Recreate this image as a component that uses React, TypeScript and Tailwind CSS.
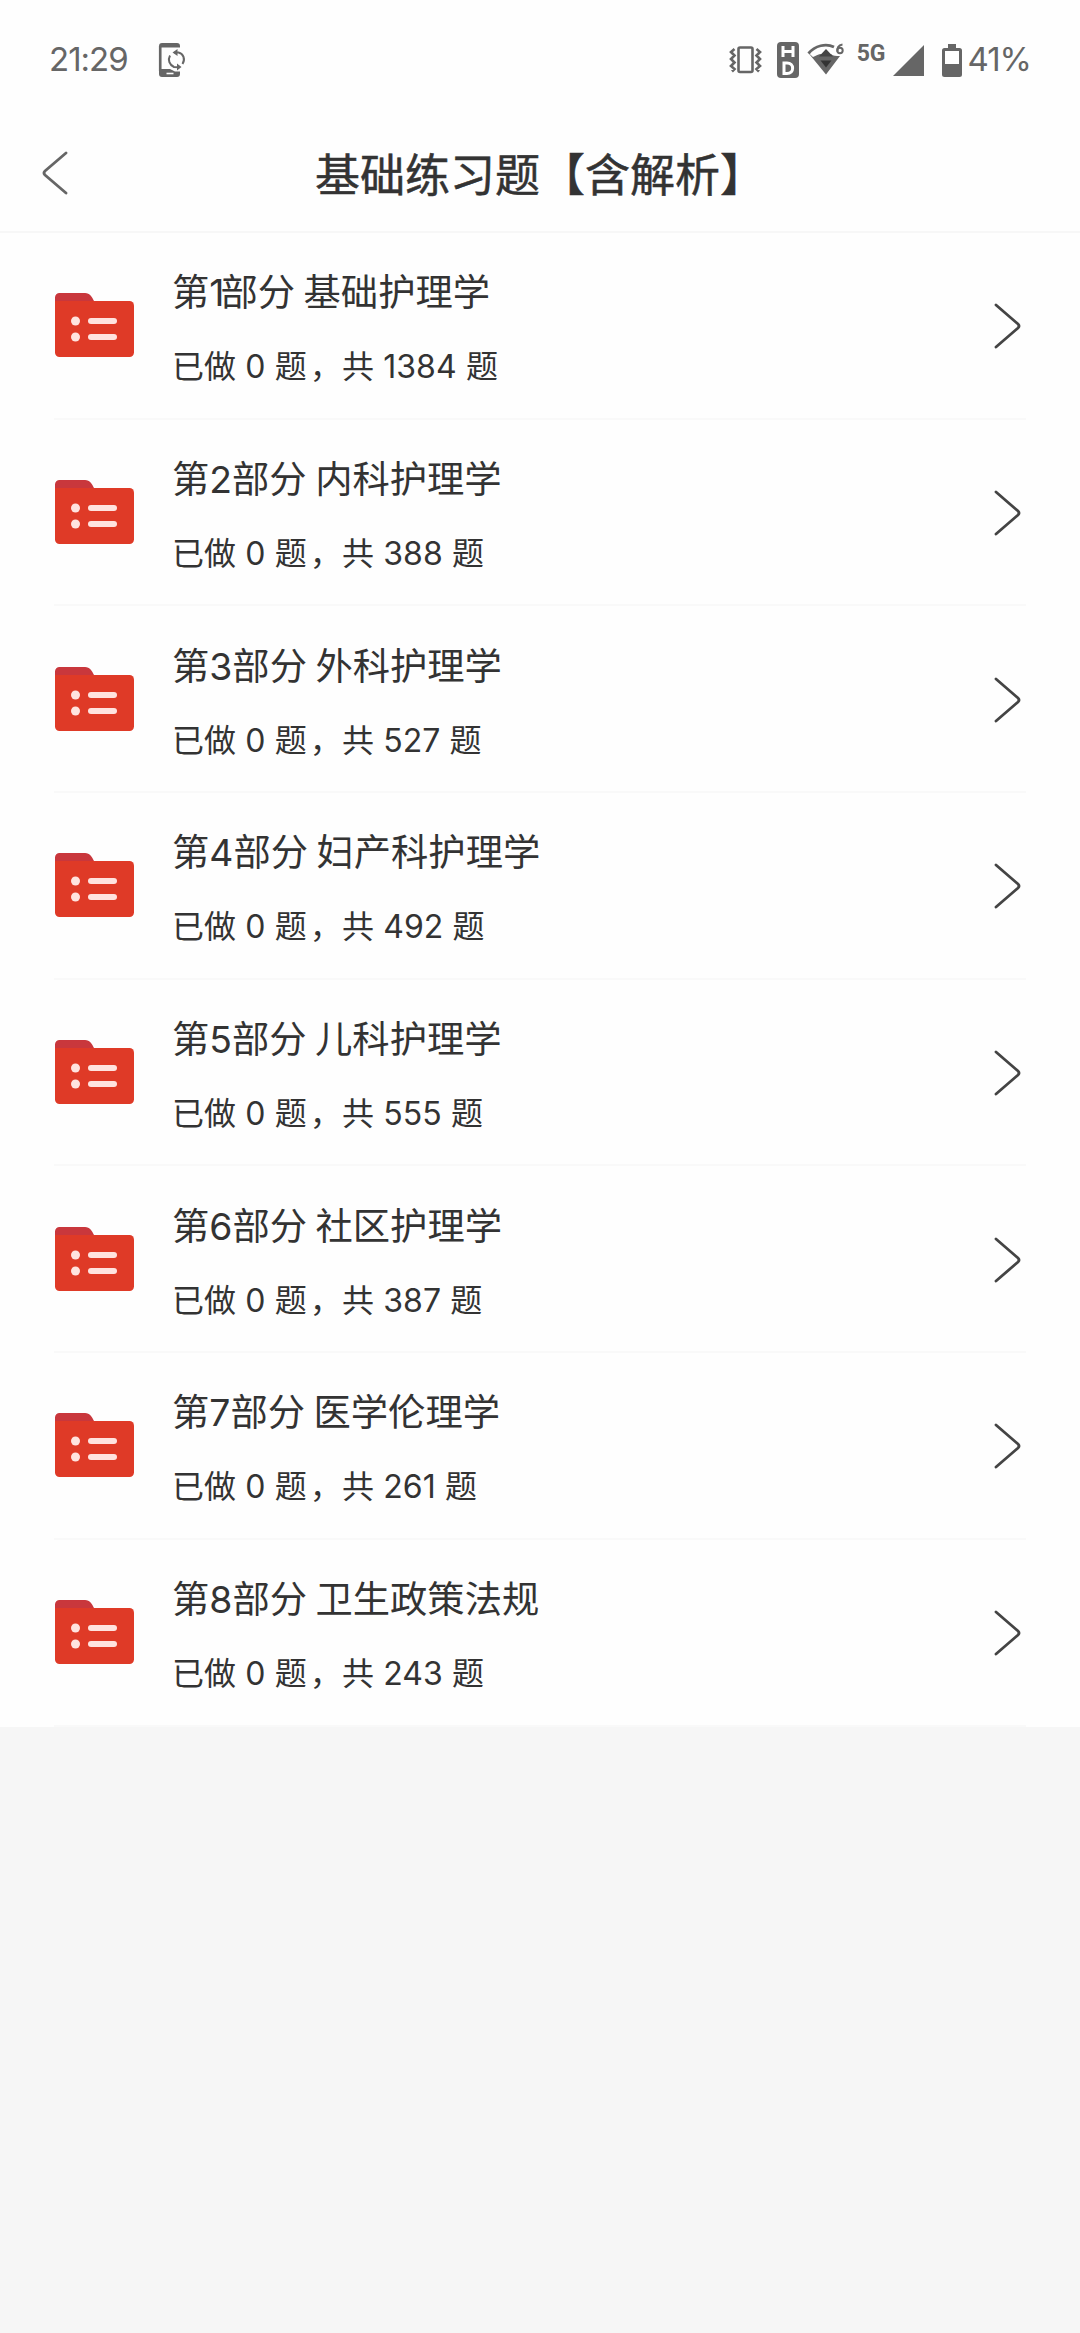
import React, { FC } from 'react';

type Section = {
  index: number;
  name: string;
  done: number;
  total: number;
};

const SECTIONS: Section[] = [
  { index: 1, name: '基础护理学', done: 0, total: 1384 },
  { index: 2, name: '内科护理学', done: 0, total: 388 },
  { index: 3, name: '外科护理学', done: 0, total: 527 },
  { index: 4, name: '妇产科护理学', done: 0, total: 492 },
  { index: 5, name: '儿科护理学', done: 0, total: 555 },
  { index: 6, name: '社区护理学', done: 0, total: 387 },
  { index: 7, name: '医学伦理学', done: 0, total: 261 },
  { index: 8, name: '卫生政策法规', done: 0, total: 243 },
];

const PhoneSyncIcon = () => (
  <svg className="ml-[30px] h-[36px] w-[28px]" viewBox="0 0 28 36" fill="none">
    <path
      d="M4 1h15a3 3 0 0 1 3 3v1.500H3.500V27H12l5 2.500h5V32a3 3 0 0 1-3 3H4a3 3 0 0 1-3-3V4a3 3 0 0 1 3-3z"
      fill="#666"
    />
    <path d="M2 4v25" stroke="#666" strokeWidth="2.200" />
    <path d="M8.500 31.500h7" stroke="#fff" strokeWidth="1.600" />
    <path
      d="M12 13.500c-2.500 4.500-.5 9.500 4 11.500l4.500.3M24.500 22c3-4.500 1-10.500-4-11.500h-4"
      stroke="#666"
      strokeWidth="2"
    />
    <path d="M19.500 7v7L14.500 10.500zM19 21.500v7l4.500-3.500z" fill="#666" />
  </svg>
);

const VibrateIcon = () => (
  <svg className="h-[28px] w-[33px]" viewBox="0 0 33 28" fill="none" stroke="#666" strokeWidth="2.600">
    <rect x="9.500" y="1.500" width="14" height="24.500" rx="1.500" />
    <path d="M5.500 3 2 6l3.500 3.500L2 13l3.500 3.500L2 20l3.500 3-2.500 2.500M27.500 3 31 6l-3.500 3.500L31 13l-3.500 3.500L31 20l-3.500 3 2.500 2.500" />
  </svg>
);

const HdIcon = () => (
  <svg className="ml-[15px] h-[36px] w-[22px]" viewBox="0 0 22 36" fill="none">
    <rect width="22" height="36" rx="4" fill="#666" />
    <path d="M6 4v11M16 4v11M6 9.500h10" stroke="#fff" strokeWidth="3" />
    <path d="M7 21v10.500h3c7.500 0 7.500-10.500 0-10.500z" stroke="#fff" strokeWidth="3" />
  </svg>
);

const WifiIcon = () => (
  <svg className="ml-[8px] h-[36px] w-[38px]" viewBox="0 0 38 36" fill="none">
    <path d="M1.500 11.500C8 3.500 19 1 27 5" stroke="#666" strokeWidth="2.800" />
    <path d="M1 10.500 6 15c3-1.500 6-3 8-3h10c2 2 5 2 9 2L19 32.500z" fill="#666" />
    <path d="M12 14.500 19 7l7 7.500z" fill="#444" />
    <path d="M13.500 18.500h11l-5.500 7z" fill="#333" />
    <path d="M35.500 2.500c-4.500.5-5.500 4-5 7" stroke="#666" strokeWidth="2" />
    <circle cx="33" cy="8.500" r="2.700" stroke="#666" strokeWidth="2" />
  </svg>
);

const SignalIcon = () => (
  <svg className="ml-[7px] h-[31px] w-[31px]" viewBox="0 0 31 31">
    <path d="M31 0v31H0z" fill="#666" />
  </svg>
);

const BatteryIcon = () => (
  <svg className="ml-[18px] h-[33px] w-[20px]" viewBox="0 0 20 33">
    <path
      d="M6 0h8v4h3.500A2.500 2.500 0 0 1 20 6.500v24a2.500 2.500 0 0 1-2.500 2.500h-15A2.500 2.500 0 0 1 0 30.500v-24A2.500 2.500 0 0 1 2.500 4H6z"
      fill="#666"
    />
    <path d="M3 7h14v13H3z" fill="#fff" />
  </svg>
);

const FolderIcon = () => (
  <svg className="h-[64px] w-[79px] shrink-0" viewBox="0 0 79 64">
    <path d="M4.500 0H30c5 0 7 4 9 8v10H0V4.500A4.500 4.500 0 0 1 4.500 0z" fill="#c9373c" />
    <path d="M0 8h74.500A4.500 4.500 0 0 1 79 12.500v47a4.500 4.500 0 0 1-4.500 4.500h-70A4.500 4.500 0 0 1 0 59.500z" fill="#df3a27" />
    <g fill="#ffe3df">
      <circle cx="20.500" cy="28" r="4.500" />
      <circle cx="20.500" cy="44" r="4.500" />
      <rect x="33" y="25" width="29" height="6" rx="3" />
      <rect x="33" y="41" width="29" height="6" rx="3" />
    </g>
  </svg>
);

const StatusBar = () => (
  <div className="flex h-[118px] items-center pt-[2px] pr-[49px] pl-[49px] text-[33px] text-[#666]">
    <span className="tracking-[-1px]">21:29</span>
    <PhoneSyncIcon />
    <div className="ml-auto flex items-center">
      <VibrateIcon />
      <HdIcon />
      <WifiIcon />
      <span className="mb-[14px] ml-[12px] font-[Roboto] text-[23px] leading-none font-bold">5G</span>
      <SignalIcon />
      <BatteryIcon />
      <span className="ml-[6px] tracking-[-1px]">41%</span>
    </div>
  </div>
);

const Header = () => (
  <header className="grid h-[115px] grid-cols-[1fr_auto_1fr] items-center border-b-2 border-[#f7f7f7]">
    <button className="mb-[4px] ml-[42px] w-fit" aria-label="返回">
      <svg className="h-[44px] w-[26px]" viewBox="0 0 26 44" fill="none">
        <path d="M24 2 3 20q-2 2 0 4l21 18" stroke="#666" strokeWidth="2.800" strokeLinecap="round" />
      </svg>
    </button>
    <h1 className="pt-[2px] text-[45px] leading-none text-[#333] [-webkit-text-stroke:0.5px_#333]">
      基础练习题【含解析】
    </h1>
    <span />
  </header>
);

const SectionRow: FC<Section> = ({ index, name, done, total }) => (
  <li className="px-[54px]">
    <div className="flex h-[186.700px] items-center border-b-2 border-[#f9f9f9] pl-[1px]">
      <FolderIcon />
      <div className="ml-[38px] flex-1 pt-[8px] text-[#333]">
        <h2 className="text-[37.300px] leading-[50px] [word-spacing:-2px]">
          第<span className={index === 1 ? 'tracking-[-4px]' : undefined}>{index}</span>部分 {name}
        </h2>
        <p className="mt-[26px] text-[32px] leading-[46px] tracking-[0.1px]">
          已做 {done} 题<span className="pl-[3px]">，</span>共 {total} 题
        </p>
      </div>
      <svg className="mt-[2px] mr-[4px] h-[46px] w-[28px]" viewBox="0 0 28 46" fill="none">
        <path d="m2 2 22 19q2 2 0 4L2 44" stroke="#444" strokeWidth="2.800" strokeLinecap="round" />
      </svg>
    </div>
  </li>
);

export default function App() {
  return (
    <div className="h-[2333px] bg-[#f6f6f6] font-[Inter,'Noto_Sans_CJK_SC',sans-serif]">
      <div className="bg-[#fefefe]">
        <StatusBar />
        <Header />
        <ul>
          {SECTIONS.map((section) => (
            <SectionRow key={section.index} {...section} />
          ))}
        </ul>
      </div>
    </div>
  );
}
